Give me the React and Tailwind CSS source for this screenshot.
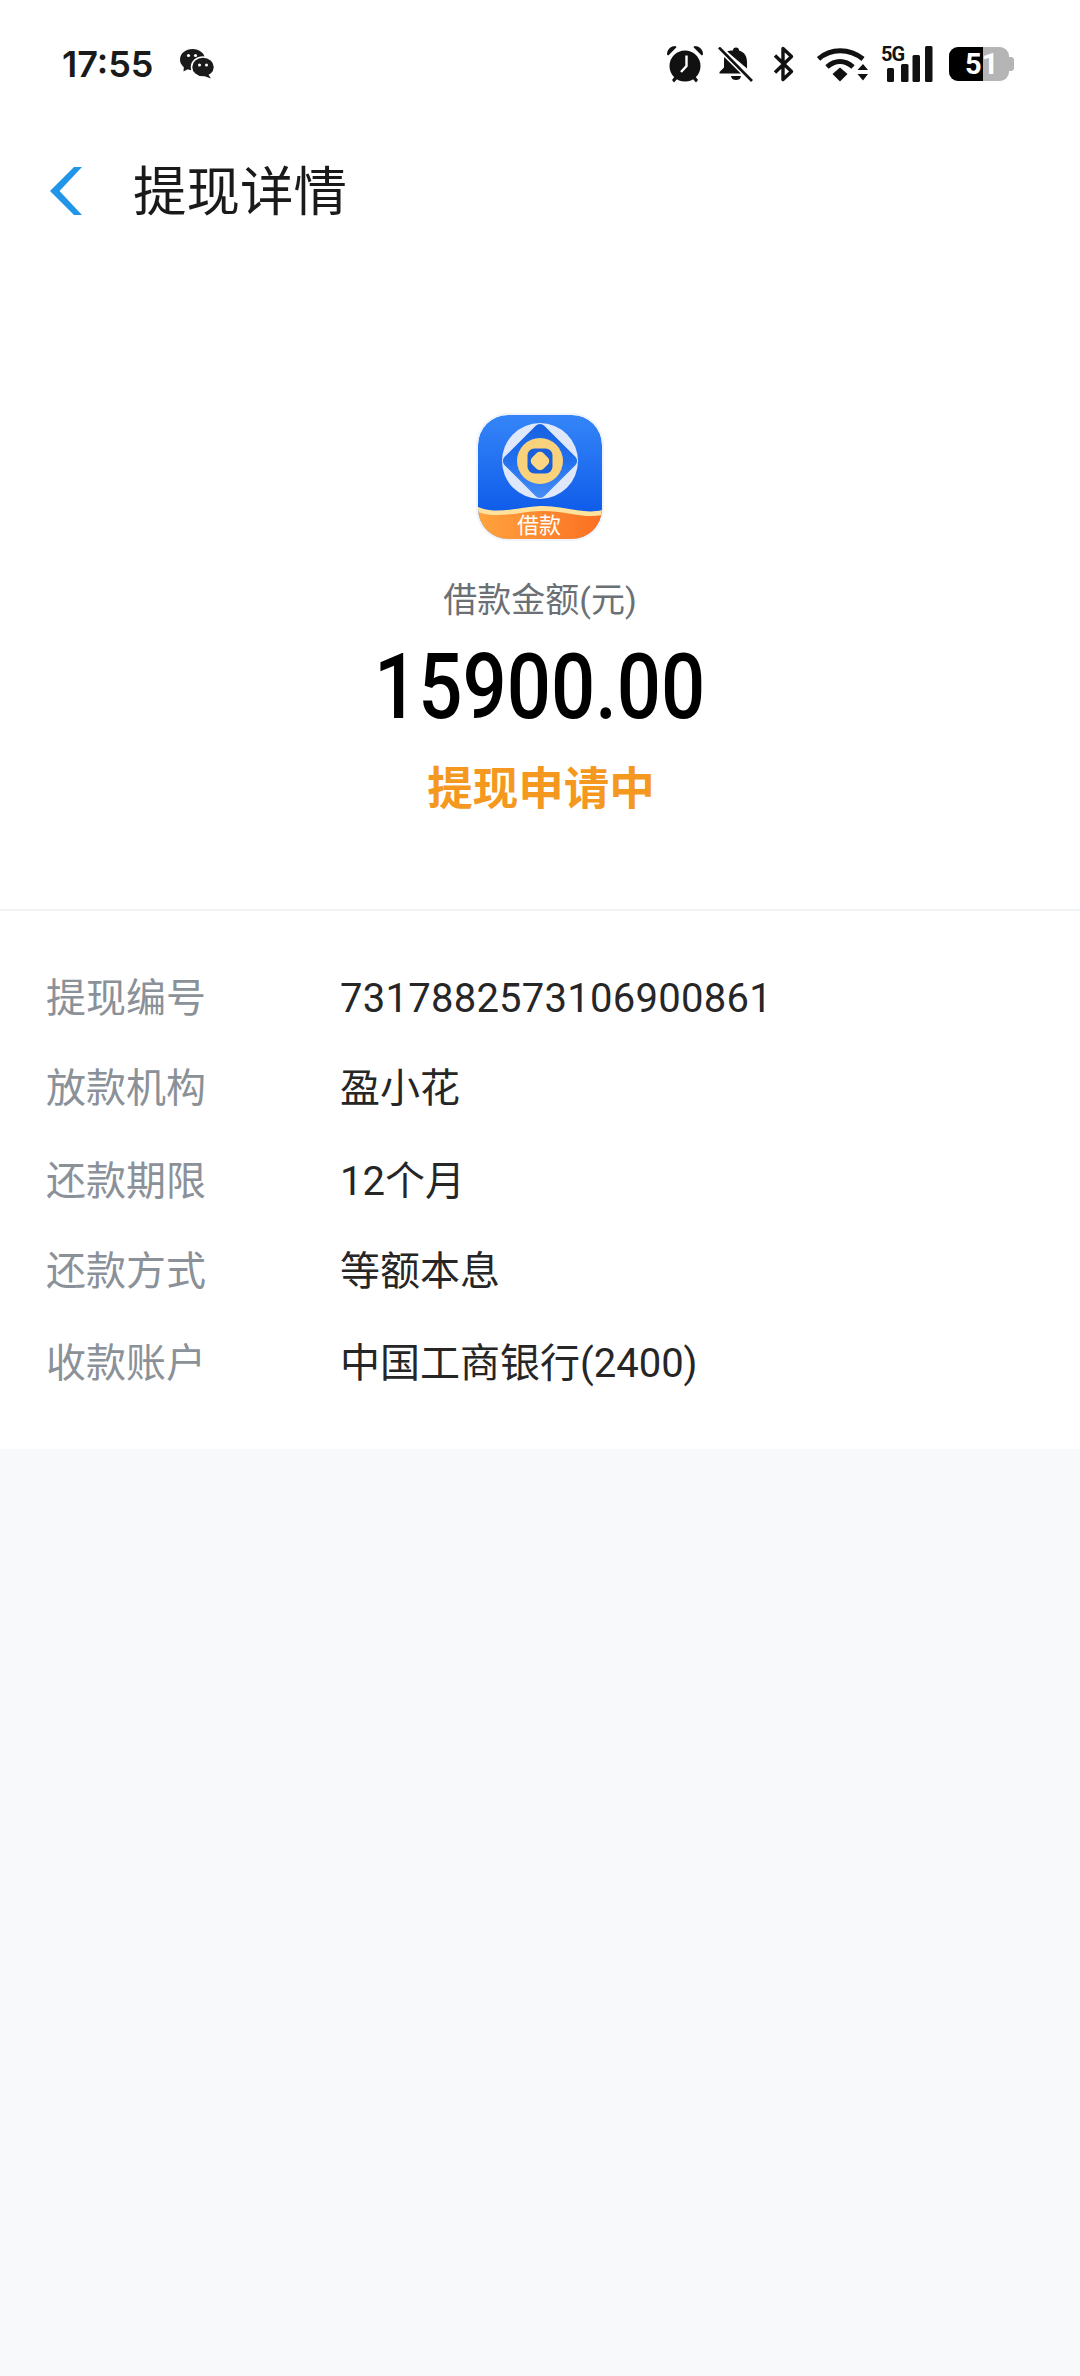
import React from "react";

const rows = [
  ["提现编号", "7317882573106900861", "mt-0", "tracking-[0.25px]"],
  ["放款机构", "盈小花", "mt-[42px]", ""],
  ["还款期限", "12个月", "mt-[45px]", ""],
  ["还款方式", "等额本息", "mt-[42px]", ""],
  ["收款账户", "中国工商银行(2400)", "mt-[44px]", ""],
];

function Alarm() {
  return (
    <svg width="38" height="38" viewBox="0 0 38 38" fill="#111">
      <path d="M1 9.5 C1 4 5 1 9.5 1 L10.5 2.2 L2.3 10.5 Z" />
      <path d="M37 9.5 C37 4 33 1 28.5 1 L27.5 2.2 L35.7 10.5 Z" />
      <circle cx="19" cy="21" r="15.5" />
      <path d="M6 35 L9 31 L12 33 L8 37.5 Z M32 35 L29 31 L26 33 L30 37.5 Z" />
      <path d="M20.5 10.5 L20.5 21 L15 27" fill="none" stroke="#fff" strokeWidth="2.4" />
    </svg>
  );
}
function BellOff() {
  return (
    <svg width="35" height="35" viewBox="0 0 35 35" fill="#111">
      <path d="M15 3.5 a3 3 0 0 1 6 0 C26.5 5 29 9.5 29 15 L29 21.5 L9 4.5 C10.5 3.8 12.5 3.5 15 3.5 Z" />
      <path d="M6.5 9.5 L24.5 26.5 L1.5 26.5 L1.5 25 L6 20.5 L6 13 C6 11.5 6.2 10.5 6.5 9.5 Z" />
      <path d="M13 29 L23 29 C22.5 32 20.5 33 18 33 C15.5 33 13.5 32 13 29 Z" />
      <path d="M1.5 1 L34 33.5" stroke="#fff" strokeWidth="6" />
      <path d="M1 0.5 L34 34" stroke="#111" strokeWidth="2.6" />
    </svg>
  );
}
function Bluetooth() {
  return (
    <svg width="21" height="36" viewBox="0 0 21 36" fill="none" stroke="#111" strokeWidth="3.4" strokeLinejoin="round">
      <path d="M2 9.5 L18.5 25.5 L10 33.5 L10 2.5 L18.5 10.5 L2 26.5" />
    </svg>
  );
}
function Wifi() {
  return (
    <svg width="51" height="35" viewBox="0 0 51 35" fill="none">
      <path d="M1.5 12 C13.5 1 32.5 1 46 12" stroke="#111" strokeWidth="5" />
      <path d="M10 20 C18 12.5 28 12.5 36 20" stroke="#111" strokeWidth="5" />
      <path d="M15.5 27 L23 20.5 L30.5 27 L23 34.5 Z" fill="#111" />
      <path d="M40.5 23 L46 17 L51 23 Z M40.5 27 L51 27 L46 33.5 Z" fill="#111" />
    </svg>
  );
}
function Signal() {
  return (
    <svg width="52" height="36" viewBox="0 0 52 36" fill="#111">
      <rect x="6" y="22" width="7" height="14" rx="1.5" />
      <rect x="20" y="18" width="7.5" height="18" rx="1.5" />
      <rect x="31.5" y="9" width="7.5" height="27" rx="1.5" />
      <rect x="44" y="0" width="7.5" height="36" rx="1.5" />
    </svg>
  );
}
function Battery() {
  return (
    <div className="relative flex h-[34px] w-[65px] items-center">
      <div className="flex h-[34px] w-[60px] overflow-hidden rounded-[9px] bg-[#b5b5b5]">
        <div className="h-full w-[34px] bg-black" />
      </div>
      <div className="h-[14px] w-[5px] rounded-r-[3px] bg-[#b5b5b5]" />
      <span className="absolute left-[16px] top-[-1px] text-[29px] leading-[36px] font-bold text-white [font-family:Roboto,sans-serif]">51</span>
    </div>
  );
}
function WeChat() {
  return (
    <svg width="34" height="30" viewBox="0 0 34 30" fill="#1a1a1a">
      <ellipse cx="12.5" cy="10.5" rx="12.5" ry="10.5" />
      <path d="M4 16 L3.5 22.5 L10 19 Z" />
      <ellipse cx="23" cy="18" rx="11.5" ry="10" stroke="#fff" strokeWidth="1.5" />
      <path d="M28 25 L31 29.5 L24 27 Z" />
      <circle cx="8.5" cy="6.5" r="1.6" fill="#fff" />
      <circle cx="15.5" cy="6.5" r="1.6" fill="#fff" />
      <circle cx="19.5" cy="16" r="1.5" fill="#fff" />
      <circle cx="26.5" cy="16" r="1.5" fill="#fff" />
    </svg>
  );
}
function Logo() {
  return (
    <svg width="124" height="124" viewBox="0 0 124 124" className="block rounded-[30px] shadow-[0_0_0_2px_#eef3fc]">
      <defs>
        <linearGradient id="bg" x1="0" y1="0" x2="0" y2="1">
          <stop offset="0" stopColor="#3585f8" />
          <stop offset="1" stopColor="#0551e6" />
        </linearGradient>
        <linearGradient id="or" x1="0" y1="0" x2="1" y2="0">
          <stop offset="0" stopColor="#ffa33e" />
          <stop offset="1" stopColor="#fb6f22" />
        </linearGradient>
        <linearGradient id="di" x1="0" y1="0" x2="1" y2="1">
          <stop offset="0" stopColor="#1560e0" />
          <stop offset="0.5" stopColor="#2270ee" />
          <stop offset="1" stopColor="#4a8ff6" />
        </linearGradient>
        <clipPath id="clip"><rect width="124" height="124" rx="30" /></clipPath>
      </defs>
      <g clipPath="url(#clip)">
        <rect width="124" height="124" fill="url(#bg)" />
        <circle cx="62" cy="46" r="38" fill="#dfe8fa" />
        <rect x="34" y="18" width="56" height="56" rx="6" transform="rotate(45 62 46)" fill="url(#di)" />
        <circle cx="62" cy="46" r="23" fill="#fbd27c" />
        <rect x="49.5" y="33.5" width="25" height="25" rx="7" fill="#1a5fd8" />
        <rect x="54" y="38" width="16" height="16" rx="5" transform="rotate(45 62 46)" fill="#fcd683" />
        <path d="M0 92 C20 100 40 92 62 91 C85 90 105 100 124 95 L124 124 L0 124 Z" fill="#ffe39c" />
        <path d="M0 97 C20 104 40 97 62 96 C85 95 105 104 124 100 L124 124 L0 124 Z" fill="url(#or)" />
        <text x="61" y="118" textAnchor="middle" fontSize="22" fill="#fff" style={{ fontFamily: '"Noto Sans CJK SC",sans-serif' }}>借款</text>
      </g>
    </svg>
  );
}

export default function App() {
  return (
    <div className="flex min-h-[2376px] w-[1080px] flex-col bg-[#f8f9fb] [font-family:Roboto,'Noto_Sans_CJK_SC',sans-serif]">
      <div className="bg-white pb-[89px]">
        <div className="flex h-[128px] items-center justify-between pl-[62px] pr-[66px]">
          <div className="flex items-center">
            <span className="text-[36px] font-semibold text-[#1a1a1a] [font-family:Inter,sans-serif]">17:55</span>
            <span className="ml-[26px]"><WeChat /></span>
          </div>
          <div className="flex items-center">
            <Alarm />
            <span className="ml-[14px]"><BellOff /></span>
            <span className="ml-[20px]"><Bluetooth /></span>
            <span className="ml-[23px]"><Wifi /></span>
            <span className="relative ml-[13px]">
              <Signal />
              <span className="absolute left-0 top-[-4px] text-[20px] leading-[24px] font-bold text-[#111] [font-family:Roboto,sans-serif] tracking-[-1px]">5G</span>
            </span>
            <span className="ml-[16px]"><Battery /></span>
          </div>
        </div>
        <div className="flex h-[126px] items-center pl-[50px]">
          <svg width="32" height="48" viewBox="0 0 32 48" fill="#2196e8"><path d="M0 24 L24 0 L32 0 L9.5 24 L32 48 L24 48 Z" /></svg>
          <span className="relative top-[-3px] ml-[51px] text-[53.5px] leading-[64px] text-[#1a1a1a] [font-family:'Noto_Sans_CJK_SC',sans-serif]">提现详情</span>
        </div>
        <div className="mt-[161px] flex flex-col items-center">
          <Logo />
          <div className="mt-[37px] text-[34px] leading-[48px] text-[#6b7075]">借款金额(元)</div>
          <div className="mt-[9px] scale-x-[0.855] text-[91px] leading-[108px] font-medium text-black">15900.00</div>
          <div className="mt-[19px] ml-[2px] text-[45.5px] leading-[60px] font-semibold text-[#f5981f]">提现申请中</div>
        </div>
      </div>
      <div className="border-t-2 border-[#f2f3f5] bg-white px-[46px] pt-[64px] pb-[61px]">
        {rows.map(([k, v, m, t]) => (
          <div key={k} className={`flex text-[40px] leading-[48px] ${m}`}>
            <div className="w-[294px] text-[#8b9198]">{k}</div>
            <div className={`text-[#262626] ${t}`}>{v}</div>
          </div>
        ))}
      </div>
    </div>
  );
}
